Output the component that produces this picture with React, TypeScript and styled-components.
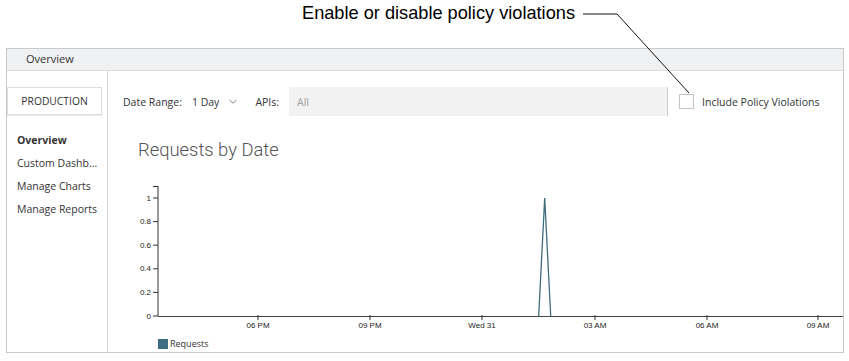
import React from "react";
import styled, { createGlobalStyle } from "styled-components";

const GlobalStyle = createGlobalStyle`
  html, body {
    margin: 0;
    padding: 0;
    background: #ffffff;
  }
  body {
    font-family: "Open Sans", "Liberation Sans", sans-serif;
    color: #333;
  }
`;

const Page = styled.div`
  position: relative;
  width: 849px;
  height: 361px;
  overflow: hidden;
`;

const CalloutRow = styled.div`
  height: 48px;
  display: flex;
  align-items: flex-start;
`;

const CalloutText = styled.div`
  margin: 3px 0 0 302px;
  font-family: "Liberation Sans", Arial, sans-serif;
  font-size: 18.2px;
  line-height: 20px;
  color: #000;
`;

const CalloutLine = styled.svg`
  position: absolute;
  left: 0;
  top: 0;
  pointer-events: none;
`;

const Panel = styled.div`
  margin-left: 6px;
  width: 836px;
  height: 303px;
  border: 1px solid #c9c9c9;
  display: flex;
  flex-direction: column;
`;

const PanelHeader = styled.div`
  height: 22px;
  box-sizing: border-box;
  padding: 0 0 2px 19px;
  background: #f0f1f2;
  border-bottom: 1px solid #dcdcdc;
  display: flex;
  align-items: center;
  font-size: 11px;
  color: #333;
`;

const Body = styled.div`
  flex: 1;
  display: flex;
`;

const Sidebar = styled.div`
  width: 100px;
  border-right: 1px solid #d6d6d6;
  padding-top: 16px;
  display: flex;
  flex-direction: column;
`;

const EnvButton = styled.div`
  width: 93px;
  height: 26px;
  border: 1px solid #dedede;
  box-shadow: 0 1px 1px rgba(0, 0, 0, 0.08);
  display: flex;
  align-items: center;
  justify-content: center;
  font-size: 10.3px;
  color: #333;
`;

const NavList = styled.div`
  margin-top: 14px;
  padding-left: 10px;
  display: flex;
  flex-direction: column;
`;

const NavItem = styled.div<{ $active?: boolean }>`
  height: 23px;
  line-height: 23px;
  font-size: 10.5px;
  font-weight: ${(p) => (p.$active ? 700 : 400)};
  color: #333;
  white-space: nowrap;
`;

const Main = styled.div`
  flex: 1;
  padding-top: 16px;
  display: flex;
  flex-direction: column;
`;

const Toolbar = styled.div`
  height: 29px;
  display: flex;
  align-items: center;
  padding-left: 15px;
  font-size: 10.5px;
  color: #333;
`;

const Label = styled.span`
  margin-right: 10px;
`;

const RangeValue = styled.span`
  display: flex;
  align-items: center;
  gap: 10px;
  margin-right: 18px;
`;

const ApiInput = styled.div`
  width: 379px;
  height: 29px;
  box-sizing: border-box;
  background: #f2f2f2;
  border-right: 1px solid #cfcfcf;
  display: flex;
  align-items: center;
  padding-left: 8px;
  color: #a0a0a0;
`;

const CheckLabel = styled.label`
  margin-left: 11px;
  display: flex;
  align-items: center;
  gap: 8px;
`;

const CheckBox = styled.span`
  width: 13px;
  height: 13px;
  border: 1px solid #c4c4c4;
  background: #fff;
`;

const ChartTitle = styled.div`
  margin: 22px 0 0 30px;
  height: 24px;
  line-height: 24px;
  font-family: Roboto, "Open Sans", sans-serif;
  font-weight: 300;
  font-size: 18.4px;
  color: #555;
`;

const ChartWrap = styled.div`
  margin-top: 14px;
  height: 176px;
`;

const TickText = styled.text`
  font-family: "Liberation Sans", Arial, sans-serif;
  font-size: 8px;
  fill: #222;
`;

const LegendText = styled.text`
  font-family: "Open Sans", sans-serif;
  font-size: 9px;
  fill: #333;
`;

const yTicks = [0, 0.2, 0.4, 0.6, 0.8, 1];
const xTicks = [
  { x: 150, label: "06 PM" },
  { x: 262, label: "09 PM" },
  { x: 374, label: "Wed 31" },
  { x: 487, label: "03 AM" },
  { x: 599, label: "06 AM" },
  { x: 710, label: "09 AM" },
];

const Y0 = 140;
const STEP = 23.6;

const Chart = () => (
  <svg width="735" height="176" viewBox="0 0 735 176">
    <line x1="50" y1="10" x2="50" y2={Y0} stroke="#333" strokeWidth="1" />
    <line x1="45" y1="10.5" x2="50" y2="10.5" stroke="#333" strokeWidth="1" />
    {yTicks.map((v, i) => {
      const y = Y0 - i * STEP;
      return (
        <g key={v}>
          <line x1="45" y1={y} x2="50" y2={y} stroke="#333" strokeWidth="1" />
          <TickText x="43" y={y + 2.5} textAnchor="end">
            {v}
          </TickText>
        </g>
      );
    })}
    <line x1="50" y1={Y0 + 0.5} x2="735" y2={Y0 + 0.5} stroke="#444" strokeWidth="1" />
    {xTicks.map((t) => (
      <g key={t.label}>
        <line x1={t.x} y1={Y0 - 1} x2={t.x} y2={Y0 + 4} stroke="#333" strokeWidth="1" />
        <TickText x={t.x} y={Y0 + 12} textAnchor="middle">
          {t.label}
        </TickText>
      </g>
    ))}
    <polyline
      points={`430.7,${Y0} 436.7,${Y0 - 5 * STEP} 442.7,${Y0}`}
      fill="none"
      stroke="#3f6d7d"
      strokeWidth="1.3"
    />
    <rect x="50" y="163" width="10" height="10" fill="#3f6e80" />
    <LegendText x="62" y="171">
      Requests
    </LegendText>
  </svg>
);

const App = () => (
  <Page>
    <GlobalStyle />
    <CalloutRow>
      <CalloutText>Enable or disable policy violations</CalloutText>
    </CalloutRow>
    <Panel>
      <PanelHeader>Overview</PanelHeader>
      <Body>
        <Sidebar>
          <EnvButton>PRODUCTION</EnvButton>
          <NavList>
            <NavItem $active>Overview</NavItem>
            <NavItem>Custom Dashb...</NavItem>
            <NavItem>Manage Charts</NavItem>
            <NavItem>Manage Reports</NavItem>
          </NavList>
        </Sidebar>
        <Main>
          <Toolbar>
            <Label>Date Range:</Label>
            <RangeValue>
              1 Day
              <svg width="8" height="5" viewBox="0 0 8 5">
                <polyline points="0.5,1 4,4.2 7.5,1" fill="none" stroke="#777" strokeWidth="0.9" />
              </svg>
            </RangeValue>
            <Label>APIs:</Label>
            <ApiInput>All</ApiInput>
            <CheckLabel>
              <CheckBox />
              Include Policy Violations
            </CheckLabel>
          </Toolbar>
          <ChartTitle>Requests by Date</ChartTitle>
          <ChartWrap>
            <Chart />
          </ChartWrap>
        </Main>
      </Body>
    </Panel>
    <CalloutLine width="849" height="361">
      <polyline points="583,14 617,14 689,93" fill="none" stroke="#111" strokeWidth="1" />
    </CalloutLine>
  </Page>
);

export default App;
